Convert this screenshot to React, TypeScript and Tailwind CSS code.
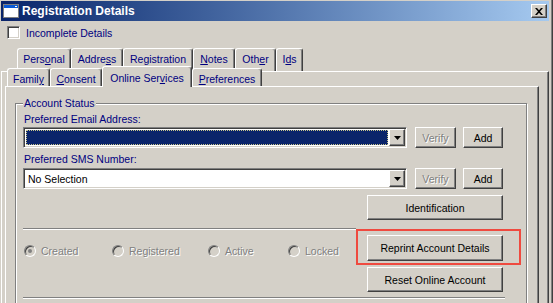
import React from "react";

const raised =
  "border border-t-white border-l-white border-r-[#404040] border-b-[#404040] shadow-[inset_-1px_-1px_#808080]";
const sunken =
  "border border-t-[#808080] border-l-[#808080] border-r-white border-b-white shadow-[inset_1px_1px_#404040,inset_-1px_-1px_#d4d0c8]";
const greyed = "text-[#808080] [text-shadow:1px_1px_0_#ffffff]";

function Btn({
  children,
  disabled,
  className = "",
}: {
  children: React.ReactNode;
  disabled?: boolean;
  className?: string;
}) {
  return (
    <div
      className={`flex items-center justify-center bg-[#d4d0c8] ${raised} ${
        disabled ? greyed : "text-black"
      } ${className}`}
    >
      {children}
    </div>
  );
}

function Arrow() {
  return (
    <div className={`w-[16px] h-[17px] flex items-center justify-center bg-[#d4d0c8] ${raised}`}>
      <svg width="7" height="4" viewBox="0 0 7 4">
        <path d="M0 0h7L3.5 4z" fill="#000" />
      </svg>
    </div>
  );
}

function Tab({
  children,
  className,
}: {
  children: React.ReactNode;
  className: string;
}) {
  return (
    <div
      className={`flex justify-center shrink-0 bg-[#d4d0c8] border-l border-t border-white border-r border-r-[#404040] rounded-t-[3px] shadow-[inset_-1px_0_#808080] text-[#000080] ${className}`}
    >
      {children}
    </div>
  );
}

function Radio({
  label,
  checked,
  className = "",
}: {
  label: string;
  checked?: boolean;
  className?: string;
}) {
  return (
    <div className={`flex items-center shrink-0 ${className}`}>
      <span className="w-[12px] h-[12px] rounded-full flex items-center justify-center bg-[#d4d0c8] border border-t-[#808080] border-l-[#808080] border-r-white border-b-white shadow-[inset_1px_1px_#404040]">
        {checked && <span className="w-[4px] h-[4px] rounded-full bg-[#808080]" />}
      </span>
      <span className={`ml-[5px] ${greyed}`}>{label}</span>
    </div>
  );
}

function Etched({ className }: { className: string }) {
  return <div className={`h-[2px] border-t border-[#808080] border-b border-b-white ${className}`} />;
}

export default function App() {
  return (
    <div className="relative w-[553px] h-[303px] overflow-hidden bg-[#d4d0c8] font-['Liberation_Sans',Arial,sans-serif] text-[10.5px] leading-[12px] shadow-[inset_-1px_0_#404040,inset_-2px_0_#808080]">
      {/* title bar */}
      <div className="ml-[1px] mt-[1px] w-[548px] h-[20px] flex items-center bg-linear-to-r from-[#0a246a] to-[#a6caf0]">
        <svg width="16" height="14" viewBox="0 0 16 14" className="ml-[2px]">
          <rect x="0.5" y="0.5" width="15" height="13" fill="#ffffff" stroke="#808080" />
          <rect x="1" y="1" width="14" height="3" fill="#0a5ad6" />
          <rect x="12" y="2" width="2" height="1" fill="#ffffff" />
        </svg>
        <span className="ml-[3px] text-white font-bold text-[12px]">Registration Details</span>
        <div className={`ml-auto mr-[2px] w-[16px] h-[14px] flex items-center justify-center bg-[#d4d0c8] ${raised}`}>
          <svg width="8" height="7" viewBox="0 0 8 7">
            <path d="M0 0h2l2 2.3L6 0h2L5 3.5 8 7H6L4 4.7 2 7H0l3-3.5z" fill="#000" />
          </svg>
        </div>
      </div>

      {/* incomplete checkbox */}
      <div className="mt-[5px] ml-[7px] flex items-center h-[13px]">
        <span className={`w-[13px] h-[13px] bg-white ${sunken}`} />
        <span className="ml-[6px] text-[#000080]">Incomplete Details</span>
      </div>

      {/* back row of tabs */}
      <div className="mt-[9px] ml-[17px] flex h-[23px]">
        <Tab className="w-[54px] pt-[4px]">
          <span>
            Pers<span className="underline">o</span>nal
          </span>
        </Tab>
        <Tab className="w-[52px] pt-[4px]">
          <span>
            Addre<span className="underline">s</span>s
          </span>
        </Tab>
        <Tab className="w-[70px] pt-[4px]">
          <span>Registration</span>
        </Tab>
        <Tab className="w-[42px] pt-[4px]">
          <span>
            <span className="underline">N</span>otes
          </span>
        </Tab>
        <Tab className="w-[41px] pt-[4px]">
          <span>
            Oth<span className="underline">e</span>r
          </span>
        </Tab>
        <Tab className="w-[27px] pt-[4px]">
          <span>
            I<span className="underline">d</span>s
          </span>
        </Tab>
      </div>

      {/* outer panel */}
      <div className="ml-[1px] w-[548px] h-[240px] border-t border-l border-white border-r border-r-[#404040] shadow-[inset_-1px_0_#808080]">
        {/* front row of tabs */}
        <div className="relative -mt-[6px] ml-[5px] flex items-end h-[20px]">
          <Tab className="w-[43px] h-[18px] pt-[4px]">
            <span>
              Famil<span className="underline">y</span>
            </span>
          </Tab>
          <Tab className="w-[52px] h-[18px] pt-[4px]">
            <span>
              <span className="underline">C</span>onsent
            </span>
          </Tab>
          <Tab className="relative z-10 w-[90px] h-[21px] -mb-[1px] pt-[5px]">
            <span>
              Online Ser<span className="underline">v</span>ices
            </span>
          </Tab>
          <Tab className="w-[70px] h-[18px] pt-[4px]">
            <span>
              <span className="underline">P</span>references
            </span>
          </Tab>
        </div>

        {/* inner panel */}
        <div className="ml-[3px] w-[534px] h-[230px] border-t border-l border-white border-r border-r-[#404040] shadow-[inset_-1px_0_#808080] pt-[16px] pl-[9px]">
          {/* Account Status group */}
          <div className="relative w-[512px] h-[220px] border border-[#808080] shadow-[inset_1px_1px_#ffffff,1px_1px_#ffffff] pl-[7px]">
            <span className="absolute -top-[7px] left-[7px] px-[1px] bg-[#d4d0c8] text-[#000080]">
              Account Status
            </span>

            <div className="w-[480px] pt-[9px]">
              <div className="pl-[1px] text-[#000080]">Preferred Email Address:</div>
              <div className="mt-[2px] flex items-center">
                <div className={`w-[384px] h-[21px] flex bg-white p-[1px] ${sunken}`}>
                  <div className="flex-1 m-[1px] bg-[#0a246a] border border-dotted border-[#c8c48a]" />
                  <Arrow />
                </div>
                <Btn disabled className="ml-[8px] w-[41px] h-[21px]">
                  Verify
                </Btn>
                <Btn className="ml-[7px] w-[40px] h-[21px]">Add</Btn>
              </div>

              <div className="mt-[5px] pl-[1px] text-[#000080]">Preferred SMS Number:</div>
              <div className="mt-[3px] flex items-center">
                <div className={`w-[384px] h-[21px] flex bg-white p-[1px] ${sunken}`}>
                  <div className="flex-1 flex items-center pl-[3px] text-black">No Selection</div>
                  <Arrow />
                </div>
                <Btn disabled className="ml-[8px] w-[41px] h-[21px]">
                  Verify
                </Btn>
                <Btn className="ml-[7px] w-[40px] h-[21px]">Add</Btn>
              </div>

              <div className="mt-[6px] flex justify-end">
                <Btn className="w-[136px] h-[25px]">Identification</Btn>
              </div>

              <div className="mt-[8px] flex">
                <div className="w-[333px]">
                  <Etched className="w-[333px]" />
                  <div className="mt-[15px] ml-[1px] flex">
                    <Radio label="Created" checked className="w-[88px]" />
                    <Radio label="Registered" className="w-[96px]" />
                    <Radio label="Active" className="w-[80px]" />
                    <Radio label="Locked" />
                  </div>
                </div>
                <div className="ml-auto w-[136px] pt-[7px]">
                  <div className="relative">
                    <Btn className="w-[136px] h-[26px]">Reprint Account Details</Btn>
                    <div className="absolute -left-[11px] -right-[18px] -top-[6px] -bottom-[4px] border-2 border-[#ef4a3f]" />
                  </div>
                  <Btn className="mt-[6px] w-[136px] h-[25px]">Reset Online Account</Btn>
                </div>
              </div>

              <Etched className="mt-[5px] w-[482px]" />
            </div>
          </div>
        </div>
      </div>
    </div>
  );
}
